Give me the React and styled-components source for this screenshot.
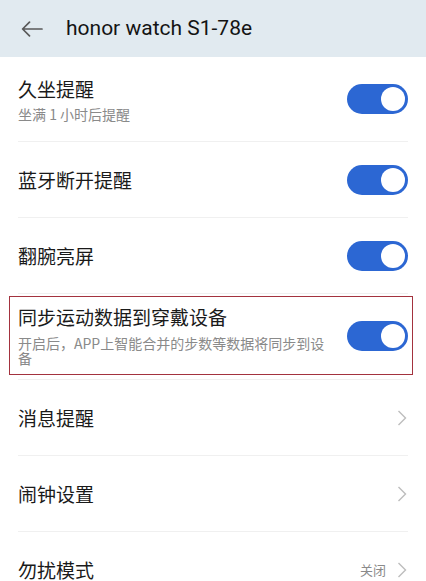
import React from 'react'
import styled, {createGlobalStyle} from 'styled-components'

const GlobalStyle = createGlobalStyle`
html,body{
  margin:0;
  padding:0;
  background:#ffffff;
  overflow:hidden;
}
body{
  font-family: Roboto, "Noto Sans CJK SC", sans-serif;
}
`

const Page = styled.div`
display:flex;
flex-direction:column;
width:426px;
height:581px;
overflow:hidden;
background:#fff;
`

const Header = styled.div`
display:flex;
align-items:center;
height:57px;
flex-shrink:0;
padding-left:21px;
background:#e1eaf0;
`

const BackButton = styled.div`
display:flex;
align-items:center;
width:22px;
height:16px;
margin-right:23px;
`

const HeaderTitle = styled.div`
font-family: Roboto, "Noto Sans CJK SC", sans-serif;
font-size:21px;
color:#141414;
margin-top:-1px;
`

const List = styled.div`
display:flex;
flex-direction:column;
padding:0 18px;
`

const Row = styled.div`
display:flex;
align-items:center;
min-height:${p => p.$height}px;
box-sizing:border-box;
border-bottom:1px solid ${p => p.$last ? 'transparent' : '#f0f0f0'};
`

const Marked = styled.div`
display:flex;
align-items:center;
flex:1;
align-self:stretch;
margin:2px -5px 4px -9px;
padding:0 4px 0 8px;
border:1px solid #a3323e;
`

const Texts = styled.div`
display:flex;
flex-direction:column;
flex:1;
margin-right:12px;
min-width:0;
`

const Title = styled.div`
font-family: "Noto Sans CJK SC", sans-serif;
font-size:19px;
line-height:24px;
color:#1a1a1a;
`

const Sub = styled.div`
font-family: "Noto Sans CJK SC", sans-serif;
font-size:14px;
line-height:15px;
color:#8a8a8a;
margin-top:${p => p.$gap}px;
`

const Track = styled.div`
display:flex;
align-items:center;
justify-content:flex-end;
width:61px;
height:30px;
border-radius:15px;
background:#2c67d3;
padding:0 3px;
box-sizing:border-box;
flex-shrink:0;
`

const Knob = styled.div`
width:24px;
height:24px;
border-radius:50%;
background:#fff;
`

const Value = styled.span`
font-family: "Noto Sans CJK SC", sans-serif;
font-size:13px;
color:#8a8a8a;
margin-right:11px;
`

const Trail = styled.div`
display:flex;
align-items:center;
margin-left:auto;
margin-right:1px;
`

function Toggle(){
  return <Track><Knob/></Track>
}

function Chevron(){
  return (
    <svg width="10" height="16" viewBox="0 0 10 16">
      <polyline points="1.5,1 8.5,8 1.5,15" fill="none" stroke="#bdbdbd" strokeWidth="1.4"/>
    </svg>
  )
}

const switches = [
  {title:'久坐提醒', sub:'坐满 1 小时后提醒', height:85},
  {title:'蓝牙断开提醒', height:76},
  {title:'翻腕亮屏', height:76},
]

const links = [
  {title:'消息提醒'},
  {title:'闹钟设置'},
  {title:'勿扰模式', value:'关闭', last:true},
]

export default function App(){
  return (
    <Page>
      <GlobalStyle/>
      <Header>
        <BackButton>
          <svg width="22" height="16" viewBox="0 0 22 16">
            <path d="M21 8H2M8.5 1.2L1.6 8l6.9 6.8" fill="none" stroke="#595959" strokeWidth="1.7" strokeLinecap="round" strokeLinejoin="round"/>
          </svg>
        </BackButton>
        <HeaderTitle>honor watch S1-78e</HeaderTitle>
      </Header>
      <List>
        {switches.map(s => (
          <Row key={s.title} $height={s.height}>
            <Texts>
              <Title>{s.title}</Title>
              {s.sub && <Sub $gap={6}>{s.sub}</Sub>}
            </Texts>
            <Toggle/>
          </Row>
        ))}
        <Row $height={86}>
          <Marked>
            <Texts>
              <Title>同步运动数据到穿戴设备</Title>
              <Sub $gap={7}>开启后，APP上智能合并的步数等数据将同步到设备</Sub>
            </Texts>
            <Toggle/>
          </Marked>
        </Row>
        {links.map(l => (
          <Row key={l.title} $height={76} $last={l.last}>
            <Title>{l.title}</Title>
            <Trail>
              {l.value && <Value>{l.value}</Value>}
              <Chevron/>
            </Trail>
          </Row>
        ))}
      </List>
    </Page>
  )
}
